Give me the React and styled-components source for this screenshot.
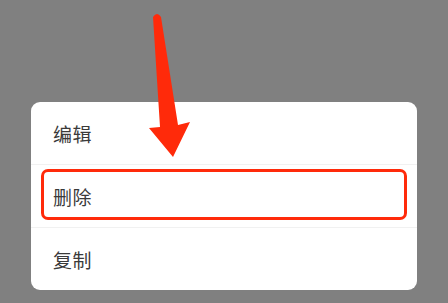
import React from "react";
import styled, { createGlobalStyle } from "styled-components";

const GlobalStyle = createGlobalStyle`
  html, body {
    margin: 0;
    padding: 0;
    background-color: #808080;
  }
  body {
    font-family: "Noto Sans CJK SC", "Noto Sans", sans-serif;
  }
`;

const Page = styled.div`
  position: relative;
  width: 448px;
  height: 303px;
  padding: 102px 31px 0;
  box-sizing: border-box;
  overflow: hidden;
`;

const Sheet = styled.div`
  width: 386px;
  background-color: #fff;
  border-radius: 9px;
  overflow: hidden;
`;

const Row = styled.div`
  position: relative;
  height: ${(props) => props.height || 63}px;
  display: flex;
  align-items: center;
  padding-left: 22px;
  box-sizing: border-box;
  color: #3a3a3a;
  font-size: 19px;
  letter-spacing: 0.5px;
  border-top: ${(props) => (props.first ? "none" : "1px solid #f1f1f1")};
`;

// red annotation box drawn over the row
const Highlight = styled.div`
  position: absolute;
  left: 10px;
  right: 10px;
  top: 4px;
  bottom: 7px;
  border: 3px solid #ff2a0a;
  border-radius: 7px;
  pointer-events: none;
`;

const Arrow = styled.svg`
  position: absolute;
  left: 0;
  top: 0;
  width: 448px;
  height: 303px;
  pointer-events: none;
`;

const items = [
  { label: "编辑", height: 62 },
  { label: "删除", height: 63, marked: true },
  { label: "复制", height: 63 },
];

const App = () => {
  return (
    <>
      <GlobalStyle />
      <Page>
        <Sheet>
          {items.map((item, i) => (
            <Row key={item.label} height={item.height} first={i === 0}>
              {item.label}
              {item.marked && <Highlight />}
            </Row>
          ))}
        </Sheet>
        <Arrow viewBox="0 0 448 303">
          <path
            d="M153 17 Q157 11 161 17 L178 125 L190 122 L173 157 L149 128 L160 127 Z"
            fill="#ff2a0a"
          />
        </Arrow>
      </Page>
    </>
  );
};

export default App;
